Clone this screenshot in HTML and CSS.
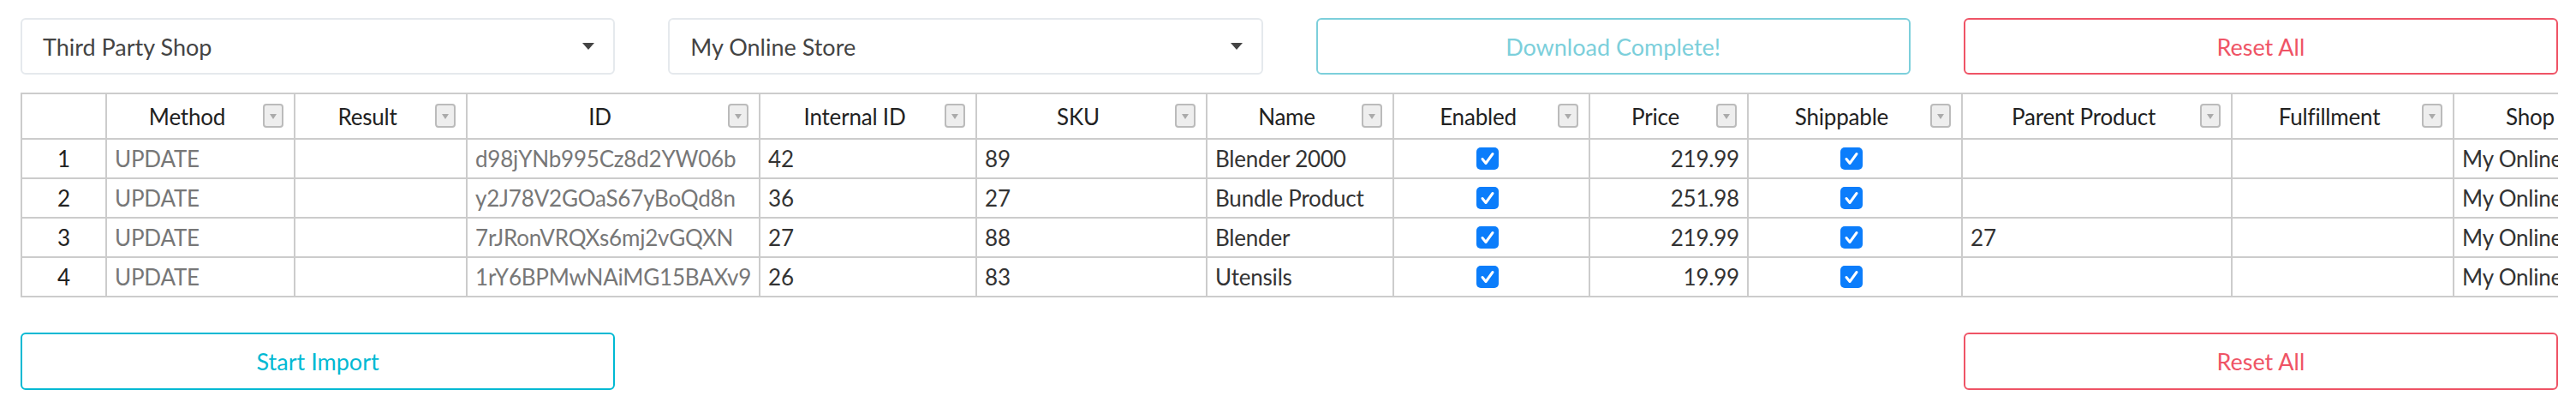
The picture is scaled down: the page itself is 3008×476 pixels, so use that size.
FILE: index.html
```html
<!DOCTYPE html>
<html lang="en">
<head>
  <meta charset="UTF-8">
  <title>Product Import</title>
  <link rel="stylesheet" href="styles.css">
</head>
<body>
<div class="page">
  <div class="toolbar">
    <div class="picker">Third Party Shop<span class="caret"></span></div>
    <div class="picker">My Online Store<span class="caret"></span></div>
    <button class="btn btn-info done">Download Complete!</button>
    <button class="btn btn-danger">Reset All</button>
  </div>

  <div class="grid-wrap">
    <table class="grid">
      <thead>
        <tr>
          <th class="w-row"></th>
          <th class="w-method">Method<span class="filter"></span></th>
          <th class="w-result">Result<span class="filter"></span></th>
          <th class="w-id">ID<span class="filter"></span></th>
          <th class="w-internal">Internal ID<span class="filter"></span></th>
          <th class="w-sku">SKU<span class="filter"></span></th>
          <th class="w-name">Name<span class="filter"></span></th>
          <th class="w-enabled">Enabled<span class="filter"></span></th>
          <th class="w-price">Price<span class="filter"></span></th>
          <th class="w-ship">Shippable<span class="filter"></span></th>
          <th class="w-parent">Parent Product<span class="filter"></span></th>
          <th class="w-fulfil">Fulfillment<span class="filter"></span></th>
          <th class="w-shop">Shop<span class="filter"></span></th>
        </tr>
      </thead>
      <tbody>
        <tr>
          <td class="rownum">1</td>
          <td class="ro">UPDATE</td>
          <td></td>
          <td class="ro">d98jYNb995Cz8d2YW06b</td>
          <td>42</td>
          <td>89</td>
          <td>Blender 2000</td>
          <td class="check"><span class="tick"><svg viewBox="0 0 26 26"><polyline points="7,13.5 11,18.5 19,7.5"/></svg></span></td>
          <td class="num">219.99</td>
          <td class="check"><span class="tick"><svg viewBox="0 0 26 26"><polyline points="7,13.5 11,18.5 19,7.5"/></svg></span></td>
          <td></td>
          <td></td>
          <td>My Online Store</td>
        </tr>
        <tr>
          <td class="rownum">2</td>
          <td class="ro">UPDATE</td>
          <td></td>
          <td class="ro">y2J78V2GOaS67yBoQd8n</td>
          <td>36</td>
          <td>27</td>
          <td>Bundle Product</td>
          <td class="check"><span class="tick"><svg viewBox="0 0 26 26"><polyline points="7,13.5 11,18.5 19,7.5"/></svg></span></td>
          <td class="num">251.98</td>
          <td class="check"><span class="tick"><svg viewBox="0 0 26 26"><polyline points="7,13.5 11,18.5 19,7.5"/></svg></span></td>
          <td></td>
          <td></td>
          <td>My Online Store</td>
        </tr>
        <tr>
          <td class="rownum">3</td>
          <td class="ro">UPDATE</td>
          <td></td>
          <td class="ro">7rJRonVRQXs6mj2vGQXN</td>
          <td>27</td>
          <td>88</td>
          <td>Blender</td>
          <td class="check"><span class="tick"><svg viewBox="0 0 26 26"><polyline points="7,13.5 11,18.5 19,7.5"/></svg></span></td>
          <td class="num">219.99</td>
          <td class="check"><span class="tick"><svg viewBox="0 0 26 26"><polyline points="7,13.5 11,18.5 19,7.5"/></svg></span></td>
          <td>27</td>
          <td></td>
          <td>My Online Store</td>
        </tr>
        <tr>
          <td class="rownum">4</td>
          <td class="ro">UPDATE</td>
          <td></td>
          <td class="ro">1rY6BPMwNAiMG15BAXv9</td>
          <td>26</td>
          <td>83</td>
          <td>Utensils</td>
          <td class="check"><span class="tick"><svg viewBox="0 0 26 26"><polyline points="7,13.5 11,18.5 19,7.5"/></svg></span></td>
          <td class="num">19.99</td>
          <td class="check"><span class="tick"><svg viewBox="0 0 26 26"><polyline points="7,13.5 11,18.5 19,7.5"/></svg></span></td>
          <td></td>
          <td></td>
          <td>My Online Store</td>
        </tr>
      </tbody>
    </table>
  </div>

  <div class="toolbar bottom">
    <button class="btn btn-info">Start Import</button>
    <div></div>
    <div></div>
    <button class="btn btn-danger">Reset All</button>
  </div>
</div>
</body>
</html>
```

FILE: styles.css
```css
body { margin: 0; font-family: "Lato", "Liberation Sans", sans-serif; color: #333; background: #fff; }
.page { padding: 21px 21px 0 24px; }

.toolbar { display: grid; grid-template-columns: repeat(4, 1fr); column-gap: 62px; height: 66px; }
.toolbar.bottom { margin-top: 41px; height: 67px; }

.picker { display: flex; align-items: center; justify-content: space-between; padding: 0 22px 0 24px; border: 2px solid #e5e9ed; border-radius: 6px; font-size: 27px; color: #444; }
.caret { width: 0; height: 0; border-top: 8px solid #444; border-left: 7px solid transparent; border-right: 7px solid transparent; }

.btn { font-family: inherit; font-size: 27px; background: #fff; border: 2px solid; border-radius: 6px; cursor: pointer; }
.btn-info { color: #00b9d3; border-color: #00b9d3; }
.btn-info.done { color: #7ccfdb; border-color: #7ccfdb; cursor: default; }
.btn-danger { color: #ef5466; border-color: #ef5466; }

.grid-wrap { margin-top: 21px; overflow: hidden; }
.grid { table-layout: fixed; width: 3052px; border-collapse: separate; border-spacing: 0; font-size: 26px; letter-spacing: -0.2px; }
.grid th, .grid td { box-sizing: border-box; border-right: 2px solid #ccc; border-bottom: 2px solid #ccc; padding: 0 9px; white-space: nowrap; overflow: hidden; }
.grid th:first-child, .grid td:first-child { border-left: 2px solid #ccc; }
.grid th { position: relative; height: 55px; border-top: 2px solid #ccc; padding-right: 40px; font-weight: normal; color: #222; text-align: center; }
.grid td { height: 46px; }
.grid td.rownum { text-align: center; color: #222; }
.grid td.ro { color: #777; }
.grid td.num { text-align: right; }
.grid td.check { text-align: center; padding-right: 18px; line-height: 0; }

.filter { position: absolute; top: 11px; right: 12px; box-sizing: border-box; width: 24px; height: 28px; background: #eee; border: 2px solid #bbb; border-radius: 4px; }
.filter::after { content: ""; position: absolute; top: 10px; left: 6px; border-top: 6px solid #aaa; border-left: 4px solid transparent; border-right: 4px solid transparent; }

.tick { display: inline-block; width: 26px; height: 26px; background: #0b7dfb; border-radius: 5px; }
.tick svg { width: 26px; height: 26px; fill: none; stroke: #fff; stroke-width: 3; stroke-linecap: round; stroke-linejoin: round; }

.w-row { width: 101px; }
.w-method { width: 220px; }
.w-result { width: 201px; }
.w-id { width: 342px; }
.w-internal { width: 253px; }
.w-sku { width: 269px; }
.w-name { width: 218px; }
.w-enabled { width: 229px; }
.w-price { width: 185px; }
.w-ship { width: 250px; }
.w-parent { width: 315px; }
.w-fulfil { width: 259px; }
.w-shop { width: 210px; }
```
